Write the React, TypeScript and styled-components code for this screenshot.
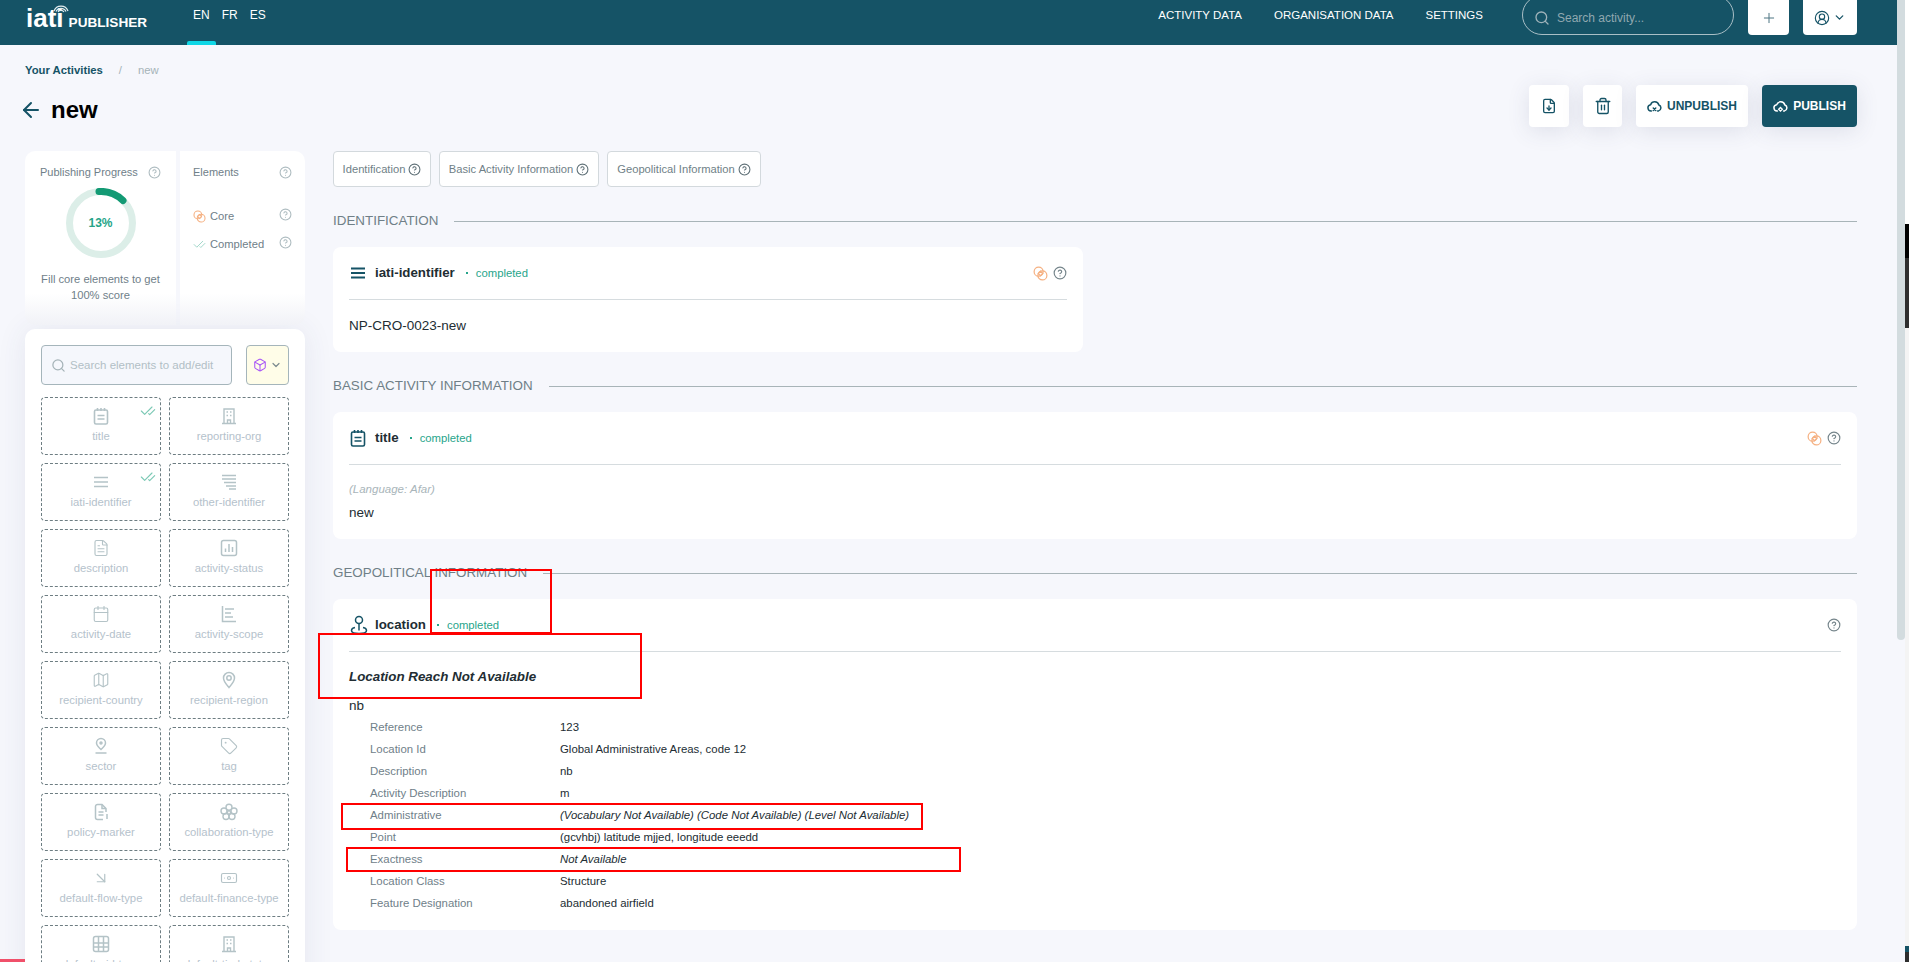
import React from 'react';
import styled, { createGlobalStyle } from 'styled-components';
import {
  ArrowDownRight, ArrowLeft, Banknote, Calendar, Box, CheckCheck, ChevronDown,
  CircleHelp, FileDown, FileText, Map, Plus, Search, Tag, Trash2, CircleUserRound,
} from 'lucide-react';

const teal = '#155366';

const GlobalStyle = createGlobalStyle`
  html, body { margin: 0; padding: 0; overflow: hidden; background: #fff; }
  * { box-sizing: border-box; }
  body { font-family: "Liberation Sans", Arial, sans-serif; }
`;

const Root = styled.div`
  position: relative;
  display: flex;
  width: 1909px;
  height: 962px;
  overflow: hidden;
`;

const Page = styled.div`
  width: 1897px;
  height: 962px;
  flex: none;
  background: #f6f7fc;
  overflow: hidden;
`;

const Track = styled.div`
  width: 8px;
  flex: none;
  background: #f6f7fc;
  &::before {
    content: '';
    display: block;
    width: 8px;
    height: 640px;
    background: #d3dcdf;
    border-radius: 0 0 4px 4px;
  }
`;

const OuterBar = styled.div`
  width: 4px;
  flex: none;
  display: flex;
  flex-direction: column;
`;

const OuterSegment = styled.div<{ $h: number; $c: string }>`
  height: ${p => p.$h}px;
  flex: none;
  background: ${p => p.$c};
`;

const TopBar = styled.header`
  height: 45px;
  background: ${teal};
  display: flex;
  align-items: flex-start;
  padding: 0 40px 0 26px;
  overflow: hidden;
  color: #fff;
`;

const Logo = styled.div`
  position: relative;
  display: flex;
  align-items: baseline;
  gap: 5px;
  width: 161px;
  padding-top: 4px;
  flex: none;
`;

const LogoMark = styled.span`
  font-size: 26px;
  line-height: 28px;
  font-weight: 700;
`;

const LogoWord = styled.span`
  font-size: 13.6px;
  font-weight: 700;
`;

const LogoWaves = styled.svg`
  position: absolute;
  left: 27px;
  top: 2px;
`;

const Lang = styled.div<{ $active?: boolean }>`
  position: relative;
  height: 45px;
  padding: 0 6px;
  font-size: 12px;
  line-height: 30px;
  ${p => p.$active ? `
  &::after {
    content: '';
    position: absolute;
    left: 0;
    right: 0;
    bottom: 0;
    height: 4px;
    border-radius: 2px 2px 0 0;
    background: #0fd7e6;
  }
  ` : ''}
`;

const TopRight = styled.div`
  margin-left: auto;
  display: flex;
  align-items: flex-start;
`;

const TopLinks = styled.nav`
  display: flex;
  gap: 32px;
  margin-right: 39px;
  font-size: 11.5px;
  line-height: 30px;
`;

const TopSearch = styled.div`
  width: 212px;
  height: 40px;
  margin-top: -5px;
  display: flex;
  align-items: center;
  gap: 7px;
  padding: 5px 16px 0 11px;
  border: 1px solid #a9bfc6;
  border-radius: 20px;
  color: #9fb3ba;
`;

const TopSearchInput = styled.input`
  width: 140px;
  border: 0;
  outline: 0;
  padding: 0;
  background: transparent;
  font: 12px "Liberation Sans", Arial, sans-serif;
  color: #fff;
  &::placeholder { color: #90a8b0; opacity: 1; }
`;

const TopButton = styled.button<{ $w: number }>`
  width: ${p => p.$w}px;
  height: 40px;
  margin: -5px 0 0 14px;
  padding: 5px 0 0;
  display: flex;
  align-items: center;
  justify-content: center;
  gap: 3px;
  border: 0;
  border-radius: 4px;
  background: #fff;
  color: ${teal};
`;

const Content = styled.main`
  padding: 16px 40px 0 25px;
`;

const Crumbs = styled.div`
  height: 18px;
  display: flex;
  align-items: center;
  gap: 16px;
  font-size: 11.3px;
  color: #a5b3b8;
`;

const CrumbLink = styled.span`
  font-weight: 700;
  color: ${teal};
`;

const TitleRow = styled.div`
  display: flex;
  justify-content: space-between;
  height: 42px;
  margin: 6px 0 24px;
`;

const PageTitle = styled.h1`
  display: flex;
  align-items: center;
  gap: 8px;
  height: 30px;
  margin: 10px 0 0 -6px;
  font-size: 24px;
  font-weight: 700;
  color: #000;
  svg { color: ${teal}; }
`;

const Actions = styled.div`
  display: flex;
  gap: 14px;
`;

const ActionButton = styled.button<{ $w: number; $dark?: boolean }>`
  width: ${p => p.$w}px;
  height: 42px;
  padding: 0;
  display: flex;
  align-items: center;
  justify-content: center;
  gap: 5px;
  border: 0;
  border-radius: 4px;
  background: ${p => p.$dark ? teal : '#fff'};
  color: ${p => p.$dark ? '#fff' : teal};
  font: 700 12px "Liberation Sans", Arial, sans-serif;
  box-shadow: 0 4px 22px rgba(60, 70, 110, .13);
`;

const Columns = styled.div`
  display: flex;
  gap: 28px;
  align-items: flex-start;
`;

const Aside = styled.aside`
  width: 280px;
  flex: none;
  display: flex;
  flex-direction: column;
  gap: 4px;
`;

const ProgressCard = styled.section`
  height: 174px;
  display: grid;
  grid-template-columns: 151px 125px;
  gap: 4px;
`;

const ProgressPanel = styled.div<{ $side: 'left' | 'right' }>`
  position: relative;
  background: linear-gradient(#fff 82%, #f1f2f7 100%);
  border-radius: ${p => p.$side === 'left' ? '10px 0 0 10px' : '0 10px 10px 0'};
  padding: ${p => p.$side === 'left' ? '13px 15px 0' : '13px 13px 0'};
`;

const PanelHead = styled.div`
  display: flex;
  align-items: center;
  justify-content: space-between;
  height: 16px;
  font-size: 11px;
  color: #6f8089;
  svg { color: #aebcc0; }
`;

const Donut = styled.div`
  position: relative;
  width: 70px;
  height: 70px;
  margin: 8px auto 0 auto;
  display: flex;
  align-items: center;
  justify-content: center;
  svg { position: absolute; inset: 0; }
`;

const DonutValue = styled.span`
  font-size: 12px;
  font-weight: 700;
  color: #25a488;
`;

const FillNote = styled.p`
  margin: 13px -6px 0;
  font-size: 11.2px;
  line-height: 16px;
  text-align: center;
  color: #6f8089;
`;

const LegendRow = styled.div<{ $top: number }>`
  display: flex;
  align-items: center;
  gap: 4px;
  height: 16px;
  margin-top: ${p => p.$top}px;
  font-size: 11.2px;
  color: #6f8089;
  > svg:last-child { margin-left: auto; color: #aebcc0; margin-top: -4px; }
`;

const ElementsCard = styled.section`
  background: #fff;
  border-radius: 10px;
  padding: 16px;
  box-shadow: 0 0 30px rgba(60, 70, 110, .09);
`;

const SearchRow = styled.div`
  display: flex;
  gap: 14px;
  margin-bottom: 12px;
`;

const SideSearch = styled.div`
  width: 191px;
  height: 40px;
  display: flex;
  align-items: center;
  gap: 4px;
  padding: 0 9px;
  background: #f5f7fc;
  border: 1px solid #a5b5bb;
  border-radius: 4px;
  color: #a5b3b8;
`;

const SideSearchInput = styled.input`
  flex: 1;
  min-width: 0;
  border: 0;
  outline: 0;
  padding: 0;
  background: transparent;
  font: 11.5px "Liberation Sans", Arial, sans-serif;
  &::placeholder { color: #b2bfc6; opacity: 1; }
`;

const FilterButton = styled.button`
  width: 43px;
  height: 40px;
  padding: 0;
  display: flex;
  align-items: center;
  justify-content: center;
  gap: 3px;
  background: #fffde8;
  border: 1px solid #a5b5bb;
  border-radius: 4px;
  color: #7c8b90;
  svg:first-child { color: #a855f7; }
`;

const TileGrid = styled.div`
  display: grid;
  grid-template-columns: 120px 120px;
  grid-auto-rows: 58px;
  gap: 8px;
`;

const Tile = styled.div`
  position: relative;
  display: flex;
  flex-direction: column;
  align-items: center;
  padding-top: 9px;
  border: 1px dashed #6d7d82;
  border-radius: 4px;
  color: #b4c3c7;
  font-size: 11.3px;
`;

const TileIcon = styled.div`
  height: 18px;
  display: flex;
  align-items: center;
`;

const TileLabel = styled.span`
  margin-top: 4px;
  line-height: 14px;
  color: #b5c2cc;
  white-space: nowrap;
`;

const TileCheck = styled.span`
  position: absolute;
  top: 5px;
  right: 4px;
  display: flex;
  color: #7cc9b5;
`;

const Sections = styled.div`
  flex: 1;
  min-width: 0;
`;

const Tabs = styled.div`
  display: flex;
  gap: 8px;
`;

const TabItem = styled.button<{ $w: number }>`
  width: ${p => p.$w}px;
  height: 36px;
  padding: 0;
  display: flex;
  align-items: center;
  justify-content: center;
  gap: 3px;
  background: #fff;
  border: 1px solid #d3d9dd;
  border-radius: 4px;
  font: 11.2px "Liberation Sans", Arial, sans-serif;
  color: #6f7f87;
  svg { color: #5f7077; }
`;

const SectionHead = styled.h2`
  display: flex;
  align-items: center;
  gap: 16px;
  height: 20px;
  margin: 23px 0 17px;
  font-size: 13.4px;
  font-weight: 400;
  text-transform: uppercase;
  color: #6f7f87;
  white-space: nowrap;
  &::after {
    content: '';
    flex: 1;
    height: 1px;
    margin-top: 2px;
    background: #a8b4b8;
  }
`;

const Card = styled.article<{ $narrow?: boolean }>`
  width: ${p => p.$narrow ? '750px' : '100%'};
  background: #fff;
  border-radius: 8px;
  padding: 16px;
`;

const CardHead = styled.div`
  display: flex;
  align-items: center;
  height: 20px;
  color: ${teal};
`;

const CardHeadIcon = styled.span`
  width: 26px;
  display: flex;
  flex: none;
`;

const CardName = styled.strong`
  margin-top: -2px;
  font-size: 13.3px;
  color: #222d33;
`;

const Status = styled.span`
  margin-left: 11px;
  font-size: 11.3px;
  color: #27a58b;
  &::before {
    content: '';
    display: inline-block;
    width: 2px;
    height: 2px;
    margin: 0 8px 2px 0;
    background: #27a58b;
    vertical-align: middle;
  }
`;

const CardTools = styled.span`
  margin-left: auto;
  display: flex;
  align-items: center;
  gap: 5px;
  svg:last-child { color: #75858b; }
`;

const Rule = styled.hr`
  height: 1px;
  margin: 16px 0 0;
  border: 0;
  background: #d6dcdf;
`;

const Value = styled.div<{ $top: number }>`
  margin-top: ${p => p.$top}px;
  font-size: 13.5px;
  line-height: 20px;
  color: #222d33;
`;

const LangNote = styled.div`
  margin-top: 16px;
  font-size: 11.5px;
  line-height: 16px;
  font-style: italic;
  color: #a9b5ba;
`;

const ReachNote = styled.div`
  margin-top: 15px;
  font-size: 13.35px;
  line-height: 20px;
  font-weight: 700;
  font-style: italic;
  color: #222d33;
`;

const Facts = styled.dl`
  margin: 0;
  padding-left: 21px;
`;

const Fact = styled.div`
  display: grid;
  grid-template-columns: 190px 1fr;
  height: 22px;
  align-items: center;
  font-size: 11.4px;
`;

const FactName = styled.dt`
  color: #6f8089;
`;

const FactValue = styled.dd<{ $missing?: boolean }>`
  margin: 0;
  color: #222d33;
  font-style: ${p => p.$missing ? 'italic' : 'normal'};
`;

const Annotation = styled.div<{ $x: number; $y: number; $w: number; $h: number }>`
  position: absolute;
  left: ${p => p.$x}px;
  top: ${p => p.$y}px;
  width: ${p => p.$w}px;
  height: ${p => p.$h}px;
  border: 2px solid #f00;
  pointer-events: none;
`;

const CornerMark = styled.div`
  position: absolute;
  left: 0;
  bottom: 0;
  width: 25px;
  height: 3px;
  background: #f0506a;
`;

const Help = ({ size = 13 }: { size?: number }) => <CircleHelp size={size} strokeWidth={2} />;

const CoreIcon = ({ size = 15 }: { size?: number }) => (
  <svg width={size} height={size} viewBox="0 0 16 16" fill="none" stroke="#f5b081" strokeWidth="1.3">
    <circle cx="6" cy="6" r="4.8" />
    <circle cx="10" cy="10" r="4.8" />
    <path d="M8 5.6 10.4 8 8 10.4 5.6 8Z" />
  </svg>
);

const LinesIcon = ({ size = 18, weight = 1.6 }: { size?: number; weight?: number }) => (
  <svg width={size} height={size} viewBox="0 0 18 18" fill="none" stroke="currentColor" strokeWidth={weight}>
    <path d="M2 4.5h14M2 9h14M2 13.500h14" />
  </svg>
);

const ManyLinesIcon = () => (
  <svg width="18" height="18" viewBox="0 0 18 18" fill="none" stroke="currentColor" strokeWidth="1.5">
    <path d="M2 2.500h14M2 6h14M4 9.500h12M6 13h10M9 16h7" />
  </svg>
);

const BuildingIcon = () => (
  <svg width="18" height="18" viewBox="0 0 18 18" fill="none" stroke="currentColor" strokeWidth="1.4">
    <path d="M4 16.500V2h10v14.500M2 16.500h14" />
    <path d="M7.500 16.500V13h3v3.500M6.500 5h1.500M10 5h1.500M6.500 8.500h1.500M10 8.500h1.500" />
  </svg>
);

const ScopeIcon = () => (
  <svg width="18" height="18" viewBox="0 0 18 18" fill="none" stroke="currentColor" strokeWidth="1.5">
    <path d="M2.500 1v15.500H16M5 4h9M5 8h6M5 12h8" />
  </svg>
);

const SectorIcon = () => (
  <svg width="18" height="18" viewBox="0 0 18 18" fill="none" stroke="currentColor" strokeWidth="1.5">
    <path d="M9 12.500C6.500 10 4.500 8.500 4.500 6a4.500 4.500 0 0 1 9 0c0 2.500-2 4-4.500 6.500Z" />
    <circle cx="9" cy="6" r="1" />
    <path d="M3.500 16h11" />
  </svg>
);

const RegionIcon = () => (
  <svg width="18" height="18" viewBox="0 0 18 18" fill="none" stroke="currentColor" strokeWidth="1.5">
    <path d="M9 16.500C6 13 3.500 10.500 3.500 7a5.500 5.500 0 0 1 11 0c0 3.500-2.500 6-5.500 9.500Z" />
    <circle cx="9" cy="7" r="2.200" />
  </svg>
);

const FlowerIcon = () => (
  <svg width="18" height="18" viewBox="0 0 18 18" fill="none" stroke="currentColor" strokeWidth="1.4">
    <circle cx="9" cy="4.200" r="3" />
    <circle cx="4" cy="8" r="3" />
    <circle cx="14" cy="8" r="3" />
    <circle cx="6" cy="13.500" r="3" />
    <circle cx="12" cy="13.500" r="3" />
    <circle cx="9" cy="9.500" r="1.600" />
  </svg>
);

const AidIcon = () => (
  <svg width="18" height="18" viewBox="0 0 18 18" fill="none" stroke="currentColor" strokeWidth="1.5">
    <rect x="1.500" y="1.500" width="15" height="15" rx="2" />
    <path d="M6.500 1.500v15M11.500 1.500v15M1.500 8h15M1.500 12h15" />
  </svg>
);

const PolicyIcon = () => (
  <svg width="18" height="18" viewBox="0 0 18 18" fill="none" stroke="currentColor" strokeWidth="1.5">
    <path d="M14 9V5.500L10 1.500H5.500a2 2 0 0 0-2 2v11a2 2 0 0 0 2 2H11" />
    <path d="M10 1.500v4h4M6.500 9h5M6.500 12h5M15 11v5" />
  </svg>
);

const StatusIcon = () => (
  <svg width="18" height="18" viewBox="0 0 18 18" fill="none" stroke="currentColor" strokeWidth="1.5">
    <rect x="1.500" y="1.500" width="15" height="15" rx="2" />
    <path d="M5.500 13V9.500M9 13V5M12.500 13V8" />
  </svg>
);

const TitleIcon = ({ size = 18 }: { size?: number }) => (
  <svg width={size} height={size} viewBox="0 0 18 18" fill="none" stroke="currentColor" strokeWidth="1.6">
    <rect x="2.500" y="3" width="13" height="14" rx="1.500" />
    <path d="M5.500 1v3M9 1v3M12.500 1v3M5.500 8.500h7M5.500 12h7" />
  </svg>
);

const LocationIcon = () => (
  <svg width="20" height="20" viewBox="0 0 20 20" fill="none" stroke="currentColor" strokeWidth="1.5">
    <circle cx="10" cy="5" r="3.500" />
    <path d="M10 8.500V15.500M6 12.500C3.500 13 2.500 14 2.500 15.500c0 2 3.500 3 7.500 3s7.500-1 7.500-3c0-1.500-1-2.500-3.500-3" />
  </svg>
);

const CloudIcon = ({ cross }: { cross?: boolean }) => (
  <svg width="15" height="15" viewBox="0 0 24 24" fill="none" stroke="currentColor" strokeWidth="2.4" strokeLinecap="round">
    <path d="M7 19H6.500a5 5 0 0 1-.7-9.950A7 7 0 0 1 19 9.500a5 5 0 0 1-.5 9.500H17" />
    {cross
      ? <path d="M10 14.500l4 4M14 14.500l-4 4" />
      : <path d="M12 13.500l3 3-3 3-3-3Z" strokeWidth="2" />}
  </svg>
);

const tiles: { label: string; icon: React.ReactNode; done?: boolean }[] = [
  { label: 'title', icon: <TitleIcon />, done: true },
  { label: 'reporting-org', icon: <BuildingIcon /> },
  { label: 'iati-identifier', icon: <LinesIcon />, done: true },
  { label: 'other-identifier', icon: <ManyLinesIcon /> },
  { label: 'description', icon: <FileText size={18} strokeWidth={1.5} /> },
  { label: 'activity-status', icon: <StatusIcon /> },
  { label: 'activity-date', icon: <Calendar size={18} strokeWidth={1.5} /> },
  { label: 'activity-scope', icon: <ScopeIcon /> },
  { label: 'recipient-country', icon: <Map size={18} strokeWidth={1.5} /> },
  { label: 'recipient-region', icon: <RegionIcon /> },
  { label: 'sector', icon: <SectorIcon /> },
  { label: 'tag', icon: <Tag size={18} strokeWidth={1.5} /> },
  { label: 'policy-marker', icon: <PolicyIcon /> },
  { label: 'collaboration-type', icon: <FlowerIcon /> },
  { label: 'default-flow-type', icon: <ArrowDownRight size={18} strokeWidth={1.6} /> },
  { label: 'default-finance-type', icon: <Banknote size={18} strokeWidth={1.5} /> },
  { label: 'default-aid-type', icon: <AidIcon /> },
  { label: 'default-tied-status', icon: <BuildingIcon /> },
];

const facts: { name: string; value: string; missing?: boolean }[] = [
  { name: 'Reference', value: '123' },
  { name: 'Location Id', value: 'Global Administrative Areas, code 12' },
  { name: 'Description', value: 'nb' },
  { name: 'Activity Description', value: 'm' },
  { name: 'Administrative', value: '(Vocabulary Not Available) (Code Not Available) (Level Not Available)', missing: true },
  { name: 'Point', value: '(gcvhbj) latitude mjjed, longitude eeedd' },
  { name: 'Exactness', value: 'Not Available', missing: true },
  { name: 'Location Class', value: 'Structure' },
  { name: 'Feature Designation', value: 'abandoned airfield' },
];

const App: React.FC = () => (
  <Root>
    <GlobalStyle />
    <Page>
      <TopBar>
        <Logo>
          <LogoMark>iati</LogoMark>
          <LogoWord>PUBLISHER</LogoWord>
          <LogoWaves width="16" height="12" viewBox="0 0 16 12" fill="none" stroke="#e4eef0" strokeWidth="1.2">
            <path d="M5 10a3.500 3.500 0 0 1 6 0M3 9.500a5.500 5.500 0 0 1 10 0M1 9a7.500 7.500 0 0 1 14 0" />
          </LogoWaves>
        </Logo>
        <Lang $active>EN</Lang>
        <Lang>FR</Lang>
        <Lang>ES</Lang>
        <TopRight>
          <TopLinks>
            <span>ACTIVITY DATA</span>
            <span>ORGANISATION DATA</span>
            <span>SETTINGS</span>
          </TopLinks>
          <TopSearch>
            <Search size={16} />
            <TopSearchInput placeholder="Search activity..." />
          </TopSearch>
          <TopButton $w={41}><Plus size={16} strokeWidth={1.5} color="#4d7482" /></TopButton>
          <TopButton $w={54}>
            <CircleUserRound size={16} strokeWidth={1.7} />
            <ChevronDown size={13} strokeWidth={2.4} />
          </TopButton>
        </TopRight>
      </TopBar>
      <Content>
        <Crumbs>
          <CrumbLink>Your Activities</CrumbLink>
          <span>/</span>
          <span>new</span>
        </Crumbs>
        <TitleRow>
          <PageTitle><ArrowLeft size={24} strokeWidth={2} />new</PageTitle>
          <Actions>
            <ActionButton $w={40}><FileDown size={16} strokeWidth={2} /></ActionButton>
            <ActionButton $w={39}><Trash2 size={18} strokeWidth={1.8} /></ActionButton>
            <ActionButton $w={112}><CloudIcon cross />UNPUBLISH</ActionButton>
            <ActionButton $w={95} $dark><CloudIcon />PUBLISH</ActionButton>
          </Actions>
        </TitleRow>
        <Columns>
          <Aside>
            <ProgressCard>
              <ProgressPanel $side="left">
                <PanelHead>Publishing Progress <Help /></PanelHead>
                <Donut>
                  <svg width="70" height="70" viewBox="0 0 70 70" fill="none">
                    <circle cx="35" cy="35" r="31.500" stroke="#dceee8" strokeWidth="7" />
                    <path d="M33 3.500A31.500 31.500 0 0 1 57 12.500" stroke="#139a74" strokeWidth="7" strokeLinecap="round" />
                  </svg>
                  <DonutValue>13%</DonutValue>
                </Donut>
                <FillNote>Fill core elements to get 100% score</FillNote>
              </ProgressPanel>
              <ProgressPanel $side="right">
                <PanelHead>Elements <Help /></PanelHead>
                <LegendRow $top={28}><CoreIcon size={13} />Core<Help /></LegendRow>
                <LegendRow $top={12}><CheckCheck size={13} color="#8fcfbf" strokeWidth={1.5} />Completed<Help /></LegendRow>
              </ProgressPanel>
            </ProgressCard>
            <ElementsCard>
              <SearchRow>
                <SideSearch>
                  <Search size={15} />
                  <SideSearchInput placeholder="Search elements to add/edit" />
                </SideSearch>
                <FilterButton>
                  <Box size={14} strokeWidth={1.8} />
                  <ChevronDown size={12} strokeWidth={2.4} />
                </FilterButton>
              </SearchRow>
              <TileGrid>
                {tiles.map(t => (
                  <Tile key={t.label}>
                    <TileIcon>{t.icon}</TileIcon>
                    <TileLabel>{t.label}</TileLabel>
                    {t.done && <TileCheck><CheckCheck size={16} strokeWidth={1.7} /></TileCheck>}
                  </Tile>
                ))}
              </TileGrid>
            </ElementsCard>
          </Aside>
          <Sections>
            <Tabs>
              <TabItem $w={98}>Identification <Help /></TabItem>
              <TabItem $w={160}>Basic Activity Information <Help /></TabItem>
              <TabItem $w={154}>Geopolitical Information <Help /></TabItem>
            </Tabs>
            <SectionHead>Identification</SectionHead>
            <Card $narrow>
              <CardHead>
                <CardHeadIcon><LinesIcon weight={2} /></CardHeadIcon>
                <CardName>iati-identifier</CardName>
                <Status>completed</Status>
                <CardTools><CoreIcon /><Help size={14} /></CardTools>
              </CardHead>
              <Rule />
              <Value $top={16}>NP-CRO-0023-new</Value>
            </Card>
            <SectionHead>Basic Activity Information</SectionHead>
            <Card>
              <CardHead>
                <CardHeadIcon><TitleIcon /></CardHeadIcon>
                <CardName>title</CardName>
                <Status>completed</Status>
                <CardTools><CoreIcon /><Help size={14} /></CardTools>
              </CardHead>
              <Rule />
              <LangNote>(Language: Afar)</LangNote>
              <Value $top={6}>new</Value>
            </Card>
            <SectionHead>Geopolitical Information</SectionHead>
            <Card>
              <CardHead>
                <CardHeadIcon><LocationIcon /></CardHeadIcon>
                <CardName>location</CardName>
                <Status>completed</Status>
                <CardTools><Help size={14} /></CardTools>
              </CardHead>
              <Rule />
              <ReachNote>Location Reach Not Available</ReachNote>
              <Value $top={9}>nb</Value>
              <Facts>
                {facts.map(f => (
                  <Fact key={f.name}>
                    <FactName>{f.name}</FactName>
                    <FactValue $missing={f.missing}>{f.value}</FactValue>
                  </Fact>
                ))}
              </Facts>
            </Card>
          </Sections>
        </Columns>
      </Content>
    </Page>
    <Track />
    <OuterBar>
      <OuterSegment $h={224} $c="#ffffff" />
      <OuterSegment $h={34} $c="#000000" />
      <OuterSegment $h={70} $c="#2e2e2e" />
      <OuterSegment $h={618} $c="#f4f4f4" />
      <OuterSegment $h={6} $c={teal} />
      <OuterSegment $h={10} $c="#2e2e2e" />
    </OuterBar>
    <Annotation $x={430} $y={569} $w={122} $h={65} />
    <Annotation $x={318} $y={633} $w={324} $h={66} />
    <Annotation $x={341} $y={803} $w={582} $h={27} />
    <Annotation $x={346} $y={847} $w={615} $h={25} />
    <CornerMark />
  </Root>
);

export default App;
